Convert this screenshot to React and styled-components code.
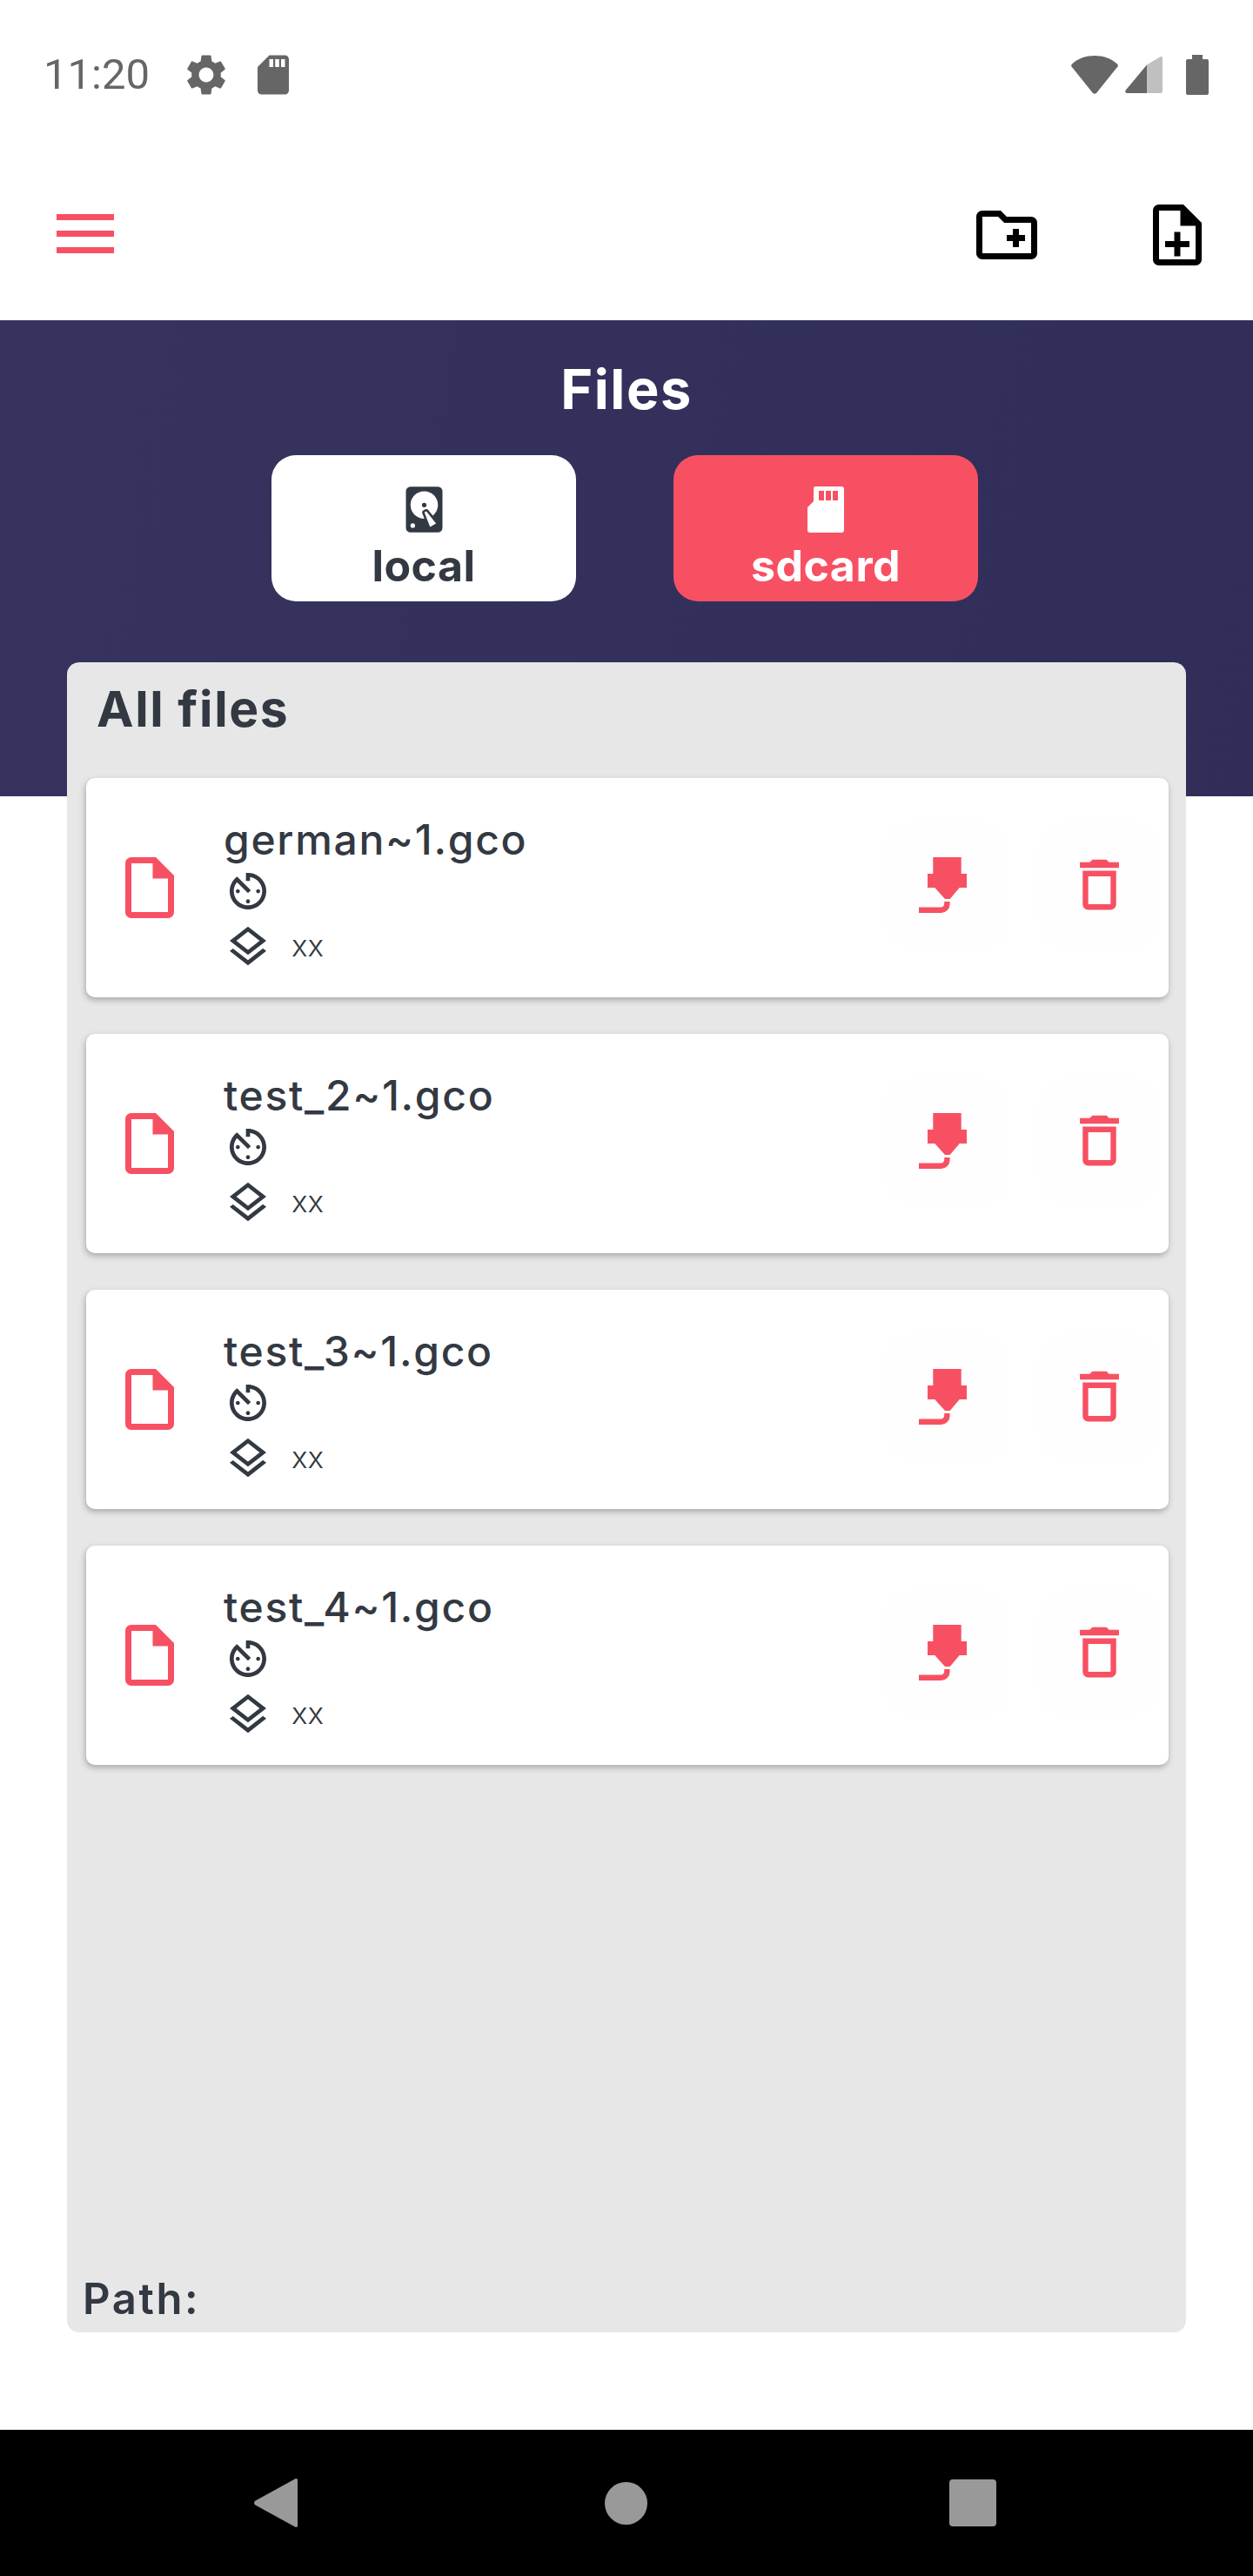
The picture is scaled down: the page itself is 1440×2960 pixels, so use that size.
import React from 'react';
import styled, { createGlobalStyle } from 'styled-components';

const PINK = '#f85063';
const INK = '#333942';

const GlobalStyle = createGlobalStyle`
  html, body {
    margin: 0;
    padding: 0;
    background: #fff;
  }
  * {
    box-sizing: border-box;
  }
`;

const Screen = styled.div`
  width: 1440px;
  height: 2960px;
  display: flex;
  flex-direction: column;
  background: #fff;
  font-family: Inter, 'Liberation Sans', sans-serif;
  color: ${INK};
  overflow: hidden;
`;

const StatusBar = styled.div`
  height: 172px;
  flex: none;
  display: flex;
  align-items: center;
  padding: 0 51px 0 50px;
  color: #666;
`;
const Clock = styled.span`
  font: 400 49px/56px Roboto, sans-serif;
  margin-right: 37px;
`;
const StatusRight = styled.div`
  margin-left: auto;
  display: flex;
  align-items: center;
  gap: 8px;
`;
const StatusIcon = styled.svg`
  display: block;
  flex: none;
  fill: currentColor;
  margin-left: ${p => p.$ml || 0}px;
`;

const Toolbar = styled.div`
  height: 196px;
  flex: none;
  display: flex;
  align-items: center;
  padding: 0 45px 0 65px;
`;
const Burger = styled.div`
  width: 66px;
  display: flex;
  flex-direction: column;
  gap: 12px;
  margin-top: -3px;
  span {
    display: block;
    height: 7px;
    background: ${PINK};
  }
`;
const ToolbarActions = styled.div`
  margin-left: auto;
  display: flex;
  gap: 112px;
`;
const Icon = styled.svg`
  display: block;
  flex: none;
  fill: ${p => p.$color || 'currentColor'};
`;

const Main = styled.div`
  flex: 1;
  display: flex;
  flex-direction: column;
  min-height: 0;
  background: linear-gradient(100deg, #36335f, #302e58) no-repeat;
  background-size: 100% 547px;
`;
const Title = styled.h1`
  margin: 0;
  padding-top: 41px;
  text-align: center;
  font-size: 63px;
  line-height: 76px;
  font-weight: 700;
  color: #fff;
  letter-spacing: 1.5px;
`;
const Tabs = styled.div`
  display: flex;
  justify-content: center;
  gap: 112px;
  margin-top: 38px;
  padding-right: 4px;
`;
const Tab = styled.div`
  width: 350px;
  height: 168px;
  border-radius: 28px;
  padding-top: 31px;
  display: flex;
  flex-direction: column;
  align-items: center;
  background: ${p => (p.$active ? PINK : '#fff')};
  color: ${p => (p.$active ? '#fff' : INK)};
  font-size: 50px;
  line-height: 56px;
  font-weight: 700;
`;
const TabIconSlot = styled.div`
  height: 63px;
  display: flex;
  align-items: center;
  justify-content: center;
`;
const TabLabel = styled.span`
  margin-top: 5px;
  letter-spacing: 0.5px;
`;

const Panel = styled.div`
  flex: 1;
  min-height: 0;
  margin: 70px 77px 112px;
  border-radius: 14px;
  background: #e7e7e7;
  display: flex;
  flex-direction: column;
`;
const PanelTitle = styled.h2`
  margin: 0;
  height: 133px;
  padding: 22px 0 0 34px;
  font-size: 57px;
  line-height: 64px;
  font-weight: 700;
  letter-spacing: 1.6px;
`;
const FileList = styled.div`
  flex: 1;
  display: flex;
  flex-direction: column;
  gap: 42px;
  padding: 0 20px 0 22px;
`;
const FileCard = styled.div`
  height: 252px;
  flex: none;
  display: flex;
  border-radius: 10px;
  background: #fff;
  box-shadow: -1px 3px 7px rgba(0, 0, 0, 0.28);
  padding: 0 10px 0 31px;
`;
const FileGlyph = styled.div`
  align-self: center;
  margin-right: 43px;
`;
const FileInfo = styled.div`
  flex: 1;
  min-width: 0;
  padding-top: 43px;
`;
const FileName = styled.div`
  height: 59px;
  font-size: 48px;
  line-height: 56px;
  font-weight: 500;
  letter-spacing: 1.7px;
`;
const InfoRow = styled.div`
  height: 56px;
  margin-bottom: 8px;
  display: flex;
  align-items: center;
  gap: 22px;
  color: ${INK};
`;
const InfoValue = styled.span`
  font-size: 35px;
  line-height: 40px;
  font-weight: 300;
  margin-bottom: 4px;
`;
const FileActions = styled.div`
  display: flex;
  gap: 33px;
  padding-top: 51px;
`;
const ActionButton = styled.div`
  width: ${p => p.$w}px;
  height: 143px;
  border-radius: 28px;
  background: #fefefe;
  display: flex;
  align-items: center;
  justify-content: center;
`;
const PathLabel = styled.div`
  height: 66px;
  padding-left: 18px;
  font-size: 49px;
  line-height: 56px;
  font-weight: 600;
  letter-spacing: 2.6px;
`;

const NavBar = styled.div`
  height: 168px;
  flex: none;
  background: #000;
  display: flex;
  align-items: center;
  padding: 0 295px 0 292px;
  justify-content: space-between;
`;
const NavCircle = styled.div`
  width: 49px;
  height: 49px;
  border-radius: 50%;
  background: #999;
  margin-left: 6px;
`;
const NavSquare = styled.div`
  width: 54px;
  height: 54px;
  border-radius: 4px;
  background: #999;
`;

const SETTINGS =
  'M19.14 12.94c.04-.3.06-.61.06-.94 0-.32-.02-.64-.07-.94l2.03-1.58c.18-.14.23-.41.12-.61l-1.92-3.32c-.12-.22-.37-.29-.59-.22l-2.39.96c-.5-.38-1.03-.7-1.62-.94l-.36-2.54c-.04-.24-.24-.41-.48-.41h-3.84c-.24 0-.43.17-.47.41l-.36 2.54c-.59.24-1.13.57-1.62.94l-2.39-.96c-.22-.08-.47 0-.59.22L2.74 8.87c-.12.21-.08.47.12.61l2.03 1.58c-.05.3-.09.63-.09.94s.02.64.07.94l-2.03 1.58c-.18.14-.23.41-.12.61l1.92 3.32c.12.22.37.29.59.22l2.39-.96c.5.38 1.03.7 1.62.94l.36 2.54c.05.24.24.41.48.41h3.84c.24 0 .44-.17.47-.41l.36-2.54c.59-.24 1.13-.56 1.62-.94l2.39.96c.22.08.47 0 .59-.22l1.92-3.32c.12-.22.07-.47-.12-.61l-2.01-1.58zM12 15.6c-1.98 0-3.6-1.62-3.6-3.6s1.62-3.6 3.6-3.6 3.6 1.62 3.6 3.6-1.62 3.6-3.6 3.6z';
const SD_CARD =
  'M18 2h-8L4.02 8 4 20c0 1.1.9 2 2 2h12c1.1 0 2-.9 2-2V4c0-1.1-.9-2-2-2zm-6 6h-2V4h2v4zm3 0h-2V4h2v4zm3 0h-2V4h2v4z';
const NEW_FOLDER =
  'M20 6h-8l-2-2H4c-1.11 0-1.99.89-1.99 2L2 18c0 1.11.89 2 2 2h16c1.11 0 2-.89 2-2V8c0-1.11-.89-2-2-2zm0 12H4V6h5.17l2 2H20v10zm-8-4h2v2h2v-2h2v-2h-2v-2h-2v2h-2z';
const NOTE_ADD =
  'M13 11h-2v3H8v2h3v3h2v-3h3v-2h-3zm1-9H6c-1.1 0-2 .9-2 2v16c0 1.1.89 2 1.99 2H18c1.1 0 2-.9 2-2V8l-6-6zm4 18H6V4h7v5h5v11z';
const HARD_DISK =
  'M6,2H18A2,2 0 0,1 20,4V20A2,2 0 0,1 18,22H6A2,2 0 0,1 4,20V4A2,2 0 0,1 6,2M12,4A6,6 0 0,0 6,10C6,13.31 8.69,16 12.1,16L11.22,13.77C10.95,13.29 11.11,12.68 11.59,12.4L12.45,11.9C12.93,11.63 13.54,11.79 13.82,12.27L15.74,14.69C17.12,13.59 18,11.9 18,10A6,6 0 0,0 12,4M12,9A1,1 0 0,1 13,10A1,1 0 0,1 12,11A1,1 0 0,1 11,10A1,1 0 0,1 12,9M7,18A1,1 0 0,0 6,19A1,1 0 0,0 7,20A1,1 0 0,0 8,19A1,1 0 0,0 7,18M12.09,13.27L14.58,19.58L17.17,18.08L12.95,12.77L12.09,13.27Z';
const FILE_OUTLINE =
  'M14 2H6c-1.1 0-1.99.9-1.99 2L4 20c0 1.1.89 2 1.99 2H18c1.1 0 2-.9 2-2V8l-6-6zM6 20V4h7v5h5v11H6z';
const AV_TIMER =
  'M11 17c0 .55.45 1 1 1s1-.45 1-1-.45-1-1-1-1 .45-1 1zm0-14v4h2V5.08c3.39.49 6 3.39 6 6.92 0 3.87-3.13 7-7 7s-7-3.13-7-7c0-1.68.59-3.22 1.58-4.42L12 13l1.41-1.41-6.8-6.8v.02C4.42 6.45 3 9.05 3 12c0 4.97 4.02 9 9 9 4.97 0 9-4.03 9-9s-4.03-9-9-9h-1zm7 9c0-.55-.45-1-1-1s-1 .45-1 1 .45 1 1 1 1-.45 1-1zM6 12c0 .55.45 1 1 1s1-.45 1-1-.45-1-1-1-1 .45-1 1z';
const LAYERS =
  'M11.99 18.54l-7.37-5.73L3 14.07l9 7 9-7-1.63-1.27-7.38 5.74zM12 16l7.36-5.73L21 9l-9-7-9 7 1.63 1.27L12 16zm0-11.47L17.74 9 12 13.47 6.26 9 12 4.53z';
const TRASH =
  'M16 9v10H8V9h8m-1.5-6h-5l-1 1H5v2h14V4h-3.5l-1-1zM18 7H6v12c0 1.1.9 2 2 2h8c1.1 0 2-.9 2-2V7z';

const files = ['german~1.gco', 'test_2~1.gco', 'test_3~1.gco', 'test_4~1.gco'];

const Material = ({ d, size, color }) => (
  <Icon viewBox="0 0 24 24" width={size} height={size} $color={color}>
    <path d={d} />
  </Icon>
);

const MicroSd = () => (
  <Icon viewBox="0 0 42 53" width={42} height={53} $color="#fff">
    <path
      fillRule="evenodd"
      d="M9 0H39a3 3 0 0 1 3 3V50a3 3 0 0 1-3 3H3a3 3 0 0 1-3-3V24L7 17V2a2 2 0 0 1 2-2zM13 5V16H19V5zM21 5V16H27V5zM29 5V16H35V5z"
    />
  </Icon>
);

const Nozzle = () => (
  <Icon viewBox="0 0 65 64" width={65} height={64} $color={PINK}>
    <path d="M16.3 0H48.7V19H55V35H46.7L35.7 48H30L18.3 35H10V19H16.3z" />
    <path d="M29.2 51H35.6V54A10 10 0 0 1 25.6 64H0V57.6H25A4 4 0 0 0 29.2 53.6z" />
  </Icon>
);

const FileRow = ({ name }) => (
  <FileCard>
    <FileGlyph>
      <Material d={FILE_OUTLINE} size={84} color={PINK} />
    </FileGlyph>
    <FileInfo>
      <FileName>{name}</FileName>
      <InfoRow>
        <Material d={AV_TIMER} size={56} />
      </InfoRow>
      <InfoRow>
        <Material d={LAYERS} size={56} />
        <InfoValue>xx</InfoValue>
      </InfoRow>
    </FileInfo>
    <FileActions>
      <ActionButton $w={143}>
        <Nozzle />
      </ActionButton>
      <ActionButton $w={140}>
        <Material d={TRASH} size={77} color={PINK} />
      </ActionButton>
    </FileActions>
  </FileCard>
);

export default function App() {
  return (
    <>
      <GlobalStyle />
      <Screen>
        <StatusBar>
          <Clock>11:20</Clock>
          <StatusIcon viewBox="0 0 24 24" width={56} height={56}>
            <path d={SETTINGS} />
          </StatusIcon>
          <StatusIcon viewBox="0 0 24 24" width={54} height={54} $ml={22}>
            <path d={SD_CARD} />
          </StatusIcon>
          <StatusRight>
            <StatusIcon viewBox="0 0 54 44" width={54} height={44}>
              <path d="M27 0C37 0 46 3 53 9.500C54 10.500 54 11.500 53.500 12.500L29 43C28 44 26 44 25 43L.5 12.500C0 11.500 0 10.500 1 9.500C8 3 17 0 27 0z" />
            </StatusIcon>
            <StatusIcon viewBox="0 0 43 42" width={43} height={42}>
              <path fill="#c0c0c0" d="M25 9.500L40 .5C42 -.5 43 .5 43 2V40C43 41 42 42 41 42H25z" />
              <path d="M25 9.500V42H3C.5 42 -.5 40 .8 38.500z" />
            </StatusIcon>
            <StatusIcon viewBox="0 0 26 46" width={26} height={46} $ml={19}>
              <path d="M7 0H19V5H24A2 2 0 0 1 26 7V44A2 2 0 0 1 24 46H2A2 2 0 0 1 0 44V7A2 2 0 0 1 2 5H7z" />
            </StatusIcon>
          </StatusRight>
        </StatusBar>

        <Toolbar>
          <Burger>
            <span />
            <span />
            <span />
          </Burger>
          <ToolbarActions>
            <Material d={NEW_FOLDER} size={84} color="#000" />
            <Material d={NOTE_ADD} size={84} color="#000" />
          </ToolbarActions>
        </Toolbar>

        <Main>
          <Title>Files</Title>
          <Tabs>
            <Tab>
              <TabIconSlot>
                <Material d={HARD_DISK} size={63} color={INK} />
              </TabIconSlot>
              <TabLabel>local</TabLabel>
            </Tab>
            <Tab $active>
              <TabIconSlot>
                <MicroSd />
              </TabIconSlot>
              <TabLabel>sdcard</TabLabel>
            </Tab>
          </Tabs>
          <Panel>
            <PanelTitle>All files</PanelTitle>
            <FileList>
              {files.map(name => (
                <FileRow key={name} name={name} />
              ))}
            </FileList>
            <PathLabel>Path:</PathLabel>
          </Panel>
        </Main>

        <NavBar>
          <svg viewBox="0 0 50 56" width={50} height={56}>
            <path fill="#999" d="M47 .5C49 -.5 50 .5 50 2V54C50 55.500 49 56.500 47 55.500L1.500 30.500C-.5 29 -.5 27 1.500 25.500z" />
          </svg>
          <NavCircle />
          <NavSquare />
        </NavBar>
      </Screen>
    </>
  );
}
